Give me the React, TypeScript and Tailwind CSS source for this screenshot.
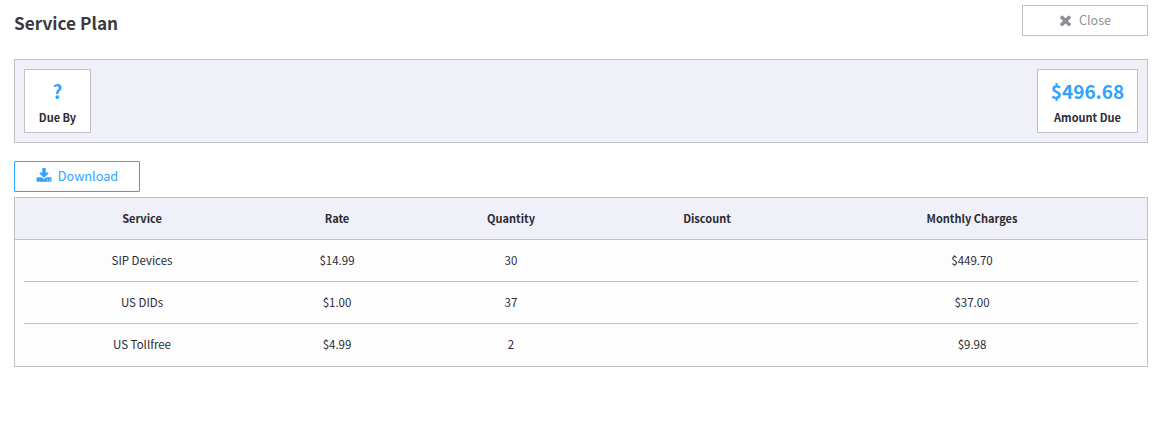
import React from "react";

interface PlanRow {
  service: string;
  rate: string;
  quantity: string;
  discount: string;
  charges: string;
}

const rows: PlanRow[] = [
  { service: "SIP Devices", rate: "$14.99", quantity: "30", discount: "", charges: "$449.70" },
  { service: "US DIDs", rate: "$1.00", quantity: "37", discount: "", charges: "$37.00" },
  { service: "US Tollfree", rate: "$4.99", quantity: "2", discount: "", charges: "$9.98" },
];

const columns = "grid grid-cols-[236px_154px_194px_198px_332px] items-center text-center";

const TimesIcon = () => (
  <svg viewBox="0 0 1408 1792" className="h-[17px] w-[13px]" fill="currentColor">
    <path d="M1298 1299q0 40-28 68l-136 136q-28 28-68 28t-68-28l-294-294-294 294q-28 28-68 28t-68-28l-136-136q-28-28-28-68t28-68l294-294-294-294q-28-28-28-68t28-68l136-136q28-28 68-28t68 28l294 294 294-294q28-28 68-28t68 28l136 136q28 28 28 68t-28 68l-294 294 294 294q28 28 28 68z" />
  </svg>
);

const DownloadIcon = () => (
  <svg viewBox="0 0 1792 1792" className="h-[16px] w-[16px]" fill="currentColor">
    <path d="M1344 1344q0-26-19-45t-45-19-45 19-19 45 19 45 45 19 45-19 19-45zm256 0q0-26-19-45t-45-19-45 19-19 45 19 45 45 19 45-19 19-45zm128-224v320q0 40-28 68t-68 28h-1472q-40 0-68-28t-28-68v-320q0-40 28-68t68-28h465l135 136q58 56 136 56t136-56l136-136h464q40 0 68 28t28 68zm-325-569q17 41-14 70l-448 448q-18 19-45 19t-45-19l-448-448q-31-29-14-70 17-39 59-39h256v-448q0-26 19-45t45-19h256q26 0 45 19t19 45v448h256q42 0 59 39z" />
  </svg>
);

const StatBox: React.FC<{ value: string; label: string; width: string }> = ({ value, label, width }) => (
  <div className={`flex h-[64px] flex-col items-center border border-[#c1c1c9] bg-white ${width}`}>
    <div className="mt-[6px] text-[19px] leading-[30px] font-bold text-[#2fa4ff]">{value}</div>
    <div className="mt-[2px] text-[11px] leading-[18px] font-semibold text-[#2b2b33]">{label}</div>
  </div>
);

const App: React.FC = () => {
  return (
    <div className="h-[437px] w-[1170px] bg-white pt-[5px] pl-[14px] font-['Noto_Sans_CJK_SC','Noto_Sans',sans-serif] text-[#333]">
      <div className="w-[1134px]">
        {/* Title and close */}
        <div className="flex h-[31px] items-center justify-between">
          <h1 className="mt-[4px] text-[17.2px] leading-[26px] font-bold text-[#3a3a3f]">Service Plan</h1>
          <button className="flex h-[31px] w-[126px] items-center justify-center gap-[7px] border border-[#c1c1c9] bg-white text-[12.5px] text-[#8f8f99]">
            <TimesIcon />
            Close
          </button>
        </div>

        {/* Summary */}
        <div className="mt-[23px] flex h-[84px] items-center justify-between border border-[#c1c1c9] bg-[#eff0f8] px-[9px]">
          <StatBox value="?" label="Due By" width="w-[67px]" />
          <StatBox value="$496.68" label="Amount Due" width="w-[101px]" />
        </div>

        <button className="mt-[18px] flex h-[31px] w-[126px] items-center justify-center gap-[6px] rounded-[1px] border border-[#2fa4ff] bg-white pb-[1px] text-[12.7px] text-[#2fa4ff]">
          <DownloadIcon />
          Download
        </button>

        {/* Charges table */}
        <div className="mt-[5px] border border-[#c1c1c9] bg-[#fdfdfd]">
          <div className="h-[42px] border-b border-[#c1c1c9] bg-[#eff0f8] px-[9px] text-[11px] font-semibold text-[#2b2b33]">
            <div className={`${columns} h-full`}>
              <div>Service</div>
              <div>Rate</div>
              <div>Quantity</div>
              <div>Discount</div>
              <div>Monthly Charges</div>
            </div>
          </div>
          <div className="px-[9px] text-[11.5px] text-[#2b2b33]">
            {rows.map((row, i) => (
              <div
                key={row.service}
                className={`${columns} h-[42px] ${i < rows.length - 1 ? "border-b border-[#c1c1c9]" : "pb-[1px]"}`}
              >
                <div>{row.service}</div>
                <div>{row.rate}</div>
                <div>{row.quantity}</div>
                <div>{row.discount}</div>
                <div>{row.charges}</div>
              </div>
            ))}
          </div>
        </div>
      </div>
    </div>
  );
};

export default App;
